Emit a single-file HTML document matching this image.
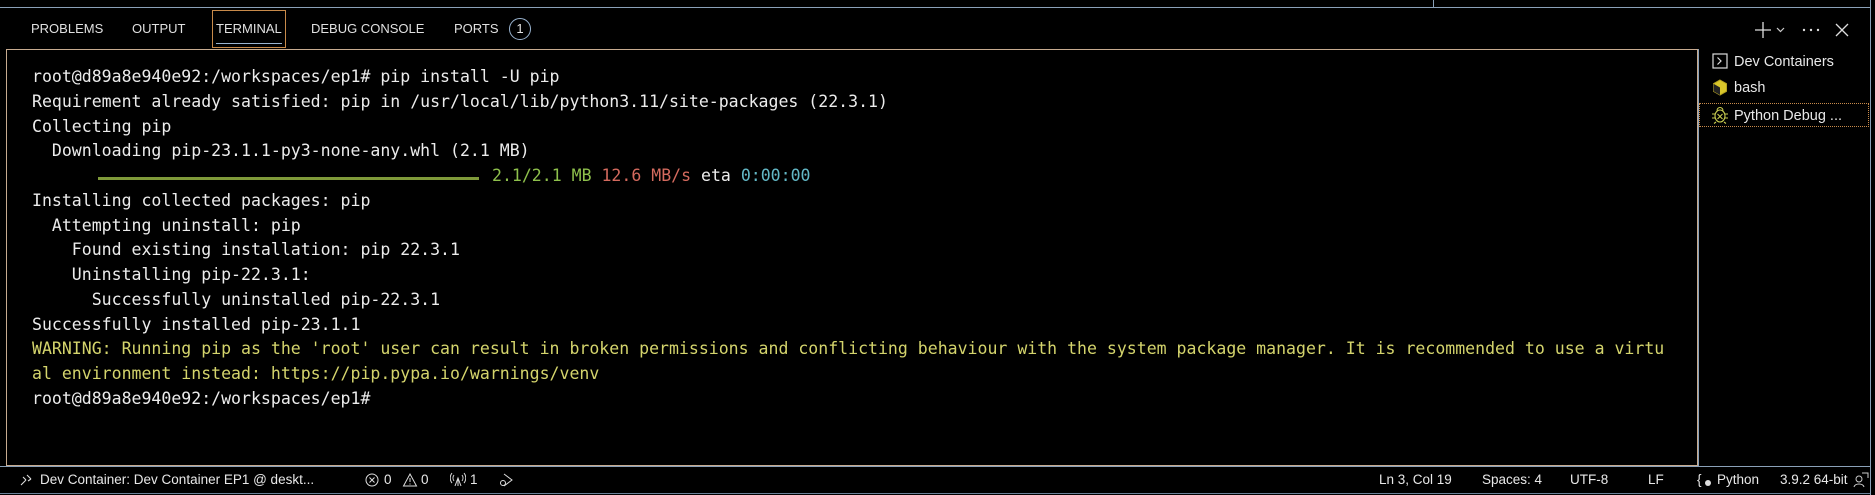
<!DOCTYPE html>
<html><head><meta charset="utf-8"><style>
*{margin:0;padding:0;box-sizing:border-box}
body{width:1875px;height:495px;background:#000;position:relative;overflow:hidden;font-family:"Liberation Sans",sans-serif;color:#e6e6e6}
.a{position:absolute;white-space:pre}
.tab{position:absolute;top:21px;font-size:13px;color:#e0e0e0;line-height:16px}
.ln{position:absolute;left:32px;font-family:"DejaVu Sans Mono",monospace;font-size:16.55px;line-height:20px;color:#ececec;white-space:pre}
.sb{position:absolute;top:472px;font-size:13.5px;line-height:16px;color:#e8e8e8;white-space:pre}
.pi{position:absolute;left:1734px;font-size:14.5px;color:#e8e8e8;line-height:18px}
</style></head><body>
<div class="a" style="left:0;top:7px;width:1870px;height:1px;background:#8aa0b8"></div>
<div class="a" style="left:1433px;top:0;width:1px;height:7px;background:#8aa0b8"></div>
<div class="a" style="left:1870px;top:0;width:1px;height:495px;background:#8aa0b8"></div>

<div class="tab" style="left:31px">PROBLEMS</div>
<div class="tab" style="left:132px">OUTPUT</div>
<div class="a" style="left:212px;top:10px;width:74px;height:38px;border:1px solid #c88a4a"></div>
<div class="tab" style="left:216px">TERMINAL</div>
<div class="a" style="left:216px;top:43px;width:66px;height:1px;background:#9ab4d0"></div>
<div class="tab" style="left:311px">DEBUG CONSOLE</div>
<div class="tab" style="left:454px">PORTS</div>
<div class="a" style="left:509px;top:18px;width:22px;height:22px;border:1px solid #9ab4d0;border-radius:50%;font-size:13px;text-align:center;line-height:20px">1</div>

<svg class="a" style="left:1754px;top:20px" width="100" height="20" viewBox="0 0 100 20">
<path d="M9 2v16M1 10h16" stroke="#ddd" stroke-width="1.3" fill="none"/>
<path d="M23 8l3.5 3.5L30 8" stroke="#ccc" stroke-width="1.2" fill="none"/>
<circle cx="50" cy="10" r="1.2" fill="#ddd"/><circle cx="57" cy="10" r="1.2" fill="#ddd"/><circle cx="64" cy="10" r="1.2" fill="#ddd"/>
<path d="M82 4l12 12M94 4L82 16" stroke="#ddd" stroke-width="1.3"/>
</svg>

<div class="a" style="left:6px;top:49px;width:1692px;height:417px;border:1px solid #c7ab90"></div>
<div class="a" style="left:1698px;top:49px;width:1px;height:417px;background:#8aa0b8"></div>

<svg class="a" style="left:1712px;top:53px" width="16" height="16"><rect x="1" y="1" width="14" height="14" fill="none" stroke="#ddd" stroke-width="1.2"/><path d="M5.5 4.5l3.5 3.5-3.5 3.5" stroke="#ddd" stroke-width="1.2" fill="none"/></svg>
<div class="pi" style="top:53px">Dev Containers</div>
<svg class="a" style="left:1712px;top:79px" width="16" height="17"><path d="M8 1l6.5 3.7v7.6L8 16 1.5 12.3V4.7z" fill="#d9c62a" stroke="#b5a320"/><path d="M1.5 4.7L8 8.5v7.5L1.5 12.3z" fill="#222"/></svg>
<div class="pi" style="top:79px">bash</div>
<div class="a" style="left:1699px;top:103px;width:170px;height:24px;border:1px dotted #c88a4a"></div>
<svg class="a" style="left:1711px;top:106px" width="18" height="18" viewBox="0 0 18 18"><g stroke="#c8cc50" stroke-width="1.1" fill="none"><ellipse cx="9" cy="10" rx="5" ry="6"/><path d="M6 4.5a3 3 0 016 0M4 8H1M4 12H1M14 8h3M14 12h3M6.5 8l5 5M11.5 8l-5 5M5 16l-2 1.5M13 16l2 1.5"/></g></svg>
<div class="pi" style="top:107px">Python Debug ...</div>

<div class="ln" style="top:67px">root@d89a8e940e92:/workspaces/ep1# pip install -U pip</div>
<div class="ln" style="top:92px">Requirement already satisfied: pip in /usr/local/lib/python3.11/site-packages (22.3.1)</div>
<div class="ln" style="top:117px">Collecting pip</div>
<div class="ln" style="top:141px">  Downloading pip-23.1.1-py3-none-any.whl (2.1 MB)</div>
<div class="a" style="left:98px;top:177px;width:381px;height:3px;background:#7f9a3a"></div>
<div class="ln" style="top:166px;left:492px"><span style="color:#8ec04c">2.1/2.1 MB</span> <span style="color:#d46a5e">12.6 MB/s</span> eta <span style="color:#63b8c6">0:00:00</span></div>
<div class="ln" style="top:191px">Installing collected packages: pip</div>
<div class="ln" style="top:216px">  Attempting uninstall: pip</div>
<div class="ln" style="top:240px">    Found existing installation: pip 22.3.1</div>
<div class="ln" style="top:265px">    Uninstalling pip-22.3.1:</div>
<div class="ln" style="top:290px">      Successfully uninstalled pip-22.3.1</div>
<div class="ln" style="top:315px">Successfully installed pip-23.1.1</div>
<div class="ln" style="top:339px;color:#d4d46c">WARNING: Running pip as the 'root' user can result in broken permissions and conflicting behaviour with the system package manager. It is recommended to use a virtu</div>
<div class="ln" style="top:364px;color:#d4d46c">al environment instead: https://pip.pypa.io/warnings/venv</div>
<div class="ln" style="top:389px">root@d89a8e940e92:/workspaces/ep1#</div>

<div class="a" style="left:0;top:466px;width:1870px;height:1px;background:#8aa0b8"></div>
<div class="a" style="left:0;top:493px;width:1870px;height:1px;background:#6a8098"></div>
<svg class="a" style="left:19px;top:473px" width="14" height="14"><path d="M2 12l5-5M7 7l-3-3M8 2l4 4M12 6l-3 2" stroke="#ddd" stroke-width="1.1" fill="none"/></svg>
<div class="sb" style="left:40px">Dev Container: Dev Container EP1 @ deskt...</div>
<svg class="a" style="left:365px;top:472px" width="70" height="16"><circle cx="7" cy="8" r="6" fill="none" stroke="#ddd"/><path d="M4.5 5.5l5 5M9.5 5.5l-5 5" stroke="#ddd"/><path d="M45 2l6.5 12h-13z" fill="none" stroke="#ddd"/><path d="M45 6v4M45 11.5v1" stroke="#ddd"/></svg>
<div class="sb" style="left:384px">0</div>
<div class="sb" style="left:421px">0</div>
<svg class="a" style="left:450px;top:471px" width="16" height="16"><path d="M8 7v8M5 15l3-8 3 8M4 4a5 5 0 000 6M12 4a5 5 0 010 6M2 2a8 8 0 000 10M14 2a8 8 0 010 10" stroke="#ddd" fill="none"/></svg>
<div class="sb" style="left:470px">1</div>
<svg class="a" style="left:498px;top:472px" width="16" height="16"><path d="M6 2l8 6-8 6" stroke="#ddd" fill="none"/><circle cx="5" cy="11" r="2.5" fill="none" stroke="#ddd"/></svg>
<div class="sb" style="left:1379px">Ln 3, Col 19</div>
<div class="sb" style="left:1482px">Spaces: 4</div>
<div class="sb" style="left:1570px">UTF-8</div>
<div class="sb" style="left:1648px">LF</div>
<div class="sb" style="left:1697px">{</div>
<div class="a" style="left:1705px;top:480px;width:6px;height:6px;border-radius:50%;background:#ddd"></div>
<div class="sb" style="left:1717px">Python</div>
<div class="sb" style="left:1780px">3.9.2 64-bit</div>
<svg class="a" style="left:1853px;top:472px" width="16" height="16"><circle cx="6" cy="7" r="3" fill="none" stroke="#ccc"/><path d="M1 15c1-4 9-4 10 0M9 1h6v5" stroke="#ccc" fill="none"/></svg>
</body></html>
